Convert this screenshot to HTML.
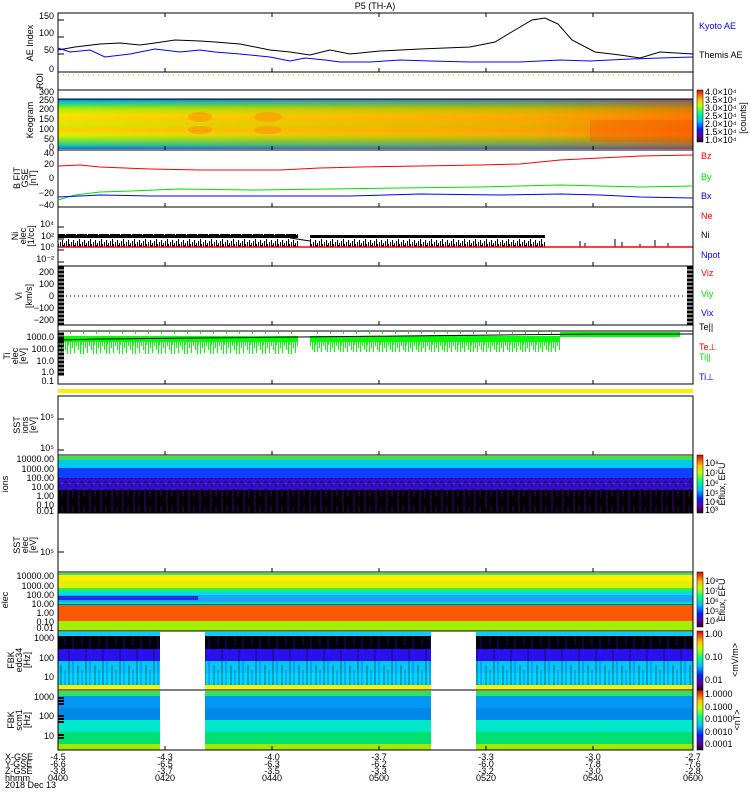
<!DOCTYPE html>
<html><head><meta charset="utf-8"><style>
html,body{margin:0;padding:0;background:#fff;width:750px;height:800px;overflow:hidden}
svg{display:block}
text{font-family:"Liberation Sans",sans-serif;font-size:9px}
</style></head><body>
<svg width="750" height="800" viewBox="0 0 750 800" xmlns="http://www.w3.org/2000/svg">
<defs>
<linearGradient id="keo" x1="0" y1="0" x2="0" y2="1">
<stop offset="0" stop-color="#0060ff"/><stop offset="0.05" stop-color="#00c0d0"/><stop offset="0.12" stop-color="#40e060"/><stop offset="0.2" stop-color="#b0f000"/><stop offset="0.32" stop-color="#f0e800"/><stop offset="0.42" stop-color="#ffd800"/><stop offset="0.5" stop-color="#d0f000"/><stop offset="0.62" stop-color="#ffd000"/><stop offset="0.72" stop-color="#e0f000"/><stop offset="0.82" stop-color="#80e830"/><stop offset="0.92" stop-color="#20d090"/><stop offset="1" stop-color="#0070ff"/>
</linearGradient>
<linearGradient id="keoR" x1="0" y1="0" x2="1" y2="0">
<stop offset="0" stop-color="#ff4000" stop-opacity="0"/><stop offset="0.4" stop-color="#ff6000" stop-opacity="0.25"/><stop offset="0.75" stop-color="#ff4000" stop-opacity="0.35"/><stop offset="1" stop-color="#ff2000" stop-opacity="0.55"/>
</linearGradient>
<linearGradient id="cbar" x1="0" y1="1" x2="0" y2="0">
<stop offset="0" stop-color="#200020"/><stop offset="0.12" stop-color="#6000a0"/><stop offset="0.25" stop-color="#0020ff"/><stop offset="0.4" stop-color="#00c0ff"/><stop offset="0.55" stop-color="#00ff80"/><stop offset="0.7" stop-color="#c0ff00"/><stop offset="0.82" stop-color="#ffc000"/><stop offset="1" stop-color="#e00000"/>
</linearGradient>
<pattern id="spk" width="11" height="14" patternUnits="userSpaceOnUse">
<path d="M0.5 14V3M1.5 14V8M2.5 14V1M3.5 14V6M4.5 14V9M5.5 14V4M6.5 14V10M7.5 14V2M8.5 14V7M9.5 14V5M10.5 14V11" stroke="#000" stroke-width="1"/>
</pattern>
<pattern id="gspk" width="13" height="24" patternUnits="userSpaceOnUse">
<rect width="13" height="6" fill="#00ff00"/>
<path d="M0.5 0V14M2.5 0V20M3.5 0V9M5.5 0V22M7.5 0V12M9.5 0V17M11.5 0V10" stroke="#00ff00" stroke-width="1"/>
</pattern>
<pattern id="speck" width="8" height="8" patternUnits="userSpaceOnUse">
<rect width="8" height="8" fill="#3010d0"/><rect x="1" y="1" width="2" height="2" fill="#200040"/><rect x="5" y="3" width="2" height="1" fill="#8030a0"/><rect x="3" y="5" width="1" height="2" fill="#000"/><rect x="6" y="6" width="2" height="2" fill="#5000a0"/>
</pattern>
<pattern id="purp" width="11" height="23" patternUnits="userSpaceOnUse">
<rect width="11" height="23" fill="#000"/><path d="M2 0V23M7 0V14" stroke="#400070" stroke-width="1"/>
</pattern>
<pattern id="fbk" width="17" height="60" patternUnits="userSpaceOnUse">
<path d="M1 0V60M10 5V50" stroke="#000" stroke-width="1"/><path d="M5 0V55M14 10V45" stroke="#2020ff" stroke-width="1"/>
</pattern>
</defs>

<text x="375" y="9" text-anchor="middle">P5 (TH-A)</text>

<!-- AE panel -->
<rect x="58" y="13" width="635" height="59" fill="none" stroke="#000"/>
<polyline fill="none" stroke="#000" points="58,50 75,47 100,44 120,43 140,45 155,43 175,40 200,41 215,42 240,44 270,50 290,52 310,55 330,50 350,54 380,51 420,49 470,47 495,42 515,30 532,20 545,18 558,24 572,40 595,52 620,55 640,58 660,52 693,54"/>
<polyline fill="none" stroke="#0000ff" points="58,48 70,52 90,50 105,57 130,54 155,49 180,52 200,50 215,52 240,54 270,57 290,61 305,58 325,60 340,62 370,62 400,60 430,61 470,62 520,62 560,60 590,61 630,59 660,58 693,57"/>
<text x="54" y="19" text-anchor="end">150</text><text x="54" y="36" text-anchor="end">100</text><text x="54" y="53" text-anchor="end">50</text><text x="54" y="72" text-anchor="end">0</text>
<text transform="translate(33,43) rotate(-90)" text-anchor="middle">AE Index</text>
<text x="699" y="29" fill="#0000ff">Kyoto AE</text><text x="699" y="58">Themis AE</text>

<!-- ROI -->
<rect x="58" y="72" width="635" height="18" fill="none" stroke="#000"/>
<line x1="58" y1="75" x2="683" y2="75" stroke="#f0a000" stroke-dasharray="1,4"/>
<text transform="translate(43,81) rotate(-90)" text-anchor="middle">ROI</text>

<!-- Keogram -->
<rect x="58" y="99" width="635" height="50" fill="url(#keo)"/>
<rect x="58" y="99" width="635" height="50" fill="url(#keoR)"/>
<ellipse cx="200" cy="117" rx="12" ry="5" fill="#ff8000" opacity="0.45"/><ellipse cx="200" cy="130" rx="12" ry="4" fill="#ff8000" opacity="0.45"/>
<ellipse cx="268" cy="117" rx="14" ry="5" fill="#ff8000" opacity="0.4"/><ellipse cx="268" cy="130" rx="14" ry="4" fill="#ff8000" opacity="0.4"/>
<rect x="590" y="120" width="103" height="22" fill="#ff4000" opacity="0.3"/>
<rect x="58" y="90" width="635" height="60" fill="none" stroke="#000"/>
<line x1="58" y1="99" x2="693" y2="99" stroke="#000"/>
<text x="54" y="95" text-anchor="end">300</text><text x="54" y="103" text-anchor="end">250</text><text x="54" y="112" text-anchor="end">200</text><text x="54" y="122" text-anchor="end">150</text><text x="54" y="132" text-anchor="end">100</text><text x="54" y="142" text-anchor="end">50</text><text x="54" y="150" text-anchor="end">0</text>
<text transform="translate(33,120) rotate(-90)" text-anchor="middle">Keogram</text>
<rect x="697" y="90" width="6" height="52" fill="url(#cbar)" stroke="#000" stroke-width="0.5"/>
<text x="705" y="95" font-size="8">4.0×10⁴</text><text x="705" y="103" font-size="8">3.5×10⁴</text><text x="705" y="111" font-size="8">3.0×10⁴</text><text x="705" y="119" font-size="8">2.5×10⁴</text><text x="705" y="127" font-size="8">2.0×10⁴</text><text x="705" y="135" font-size="8">1.5×10⁴</text><text x="705" y="143" font-size="8">1.0×10⁴</text>
<text transform="translate(746,118) rotate(-90)" text-anchor="middle" font-size="8">[counts]</text>

<!-- B field -->
<rect x="58" y="150" width="635" height="57" fill="none" stroke="#000"/>
<polyline fill="none" stroke="#ff0000" points="58,166 80,165 100,167 150,169 200,170 280,170 320,168 360,167 420,166 480,165 520,164 560,160 600,158 640,156 693,155"/>
<polyline fill="none" stroke="#00e000" points="58,200 75,195 100,192 130,191 180,189 250,190 330,189 400,188 480,187 560,185 600,186 640,187 693,186"/>
<polyline fill="none" stroke="#0000ff" points="58,197 80,196 100,195 150,196 250,196 350,196 420,194 500,195 560,194 600,195 640,197 693,198"/>
<text x="54" y="156" text-anchor="end">40</text><text x="54" y="167" text-anchor="end">20</text><text x="54" y="181" text-anchor="end">0</text><text x="54" y="196" text-anchor="end">−20</text><text x="54" y="208" text-anchor="end">−40</text>
<text transform="translate(20,178) rotate(-90)" text-anchor="middle" font-size="8">B FIT</text><text transform="translate(28,178) rotate(-90)" text-anchor="middle" font-size="8">GSE</text><text transform="translate(36,178) rotate(-90)" text-anchor="middle" font-size="8">[nT]</text>
<text x="701" y="159" fill="#ff0000">Bz</text><text x="701" y="180" fill="#00e000">By</text><text x="701" y="199" fill="#0000ff">Bx</text>

<!-- Ni -->
<rect x="58" y="234" width="240" height="13" fill="url(#spk)"/>
<rect x="310" y="235" width="235" height="12" fill="url(#spk)"/>
<polyline fill="none" stroke="#000" points="290,238 310,241"/>
<path d="M580 247v-6M585 247v-4M615 247v-8M622 247v-5M640 247v-3M655 247v-7M668 247v-4" stroke="#000"/>
<line x1="58" y1="247" x2="693" y2="247" stroke="#ff0000" stroke-width="1.5"/>
<rect x="58" y="207" width="635" height="59" fill="none" stroke="#000"/>
<text x="54" y="227" text-anchor="end">10⁴</text><text x="54" y="239" text-anchor="end">10²</text><text x="54" y="250" text-anchor="end">10⁰</text><text x="54" y="262" text-anchor="end">10⁻²</text>
<text transform="translate(18,236) rotate(-90)" text-anchor="middle" font-size="8">Ni</text><text transform="translate(26,236) rotate(-90)" text-anchor="middle" font-size="8">elec</text><text transform="translate(34,236) rotate(-90)" text-anchor="middle" font-size="8">[1/cc]</text>
<text x="701" y="219" fill="#ff0000">Ne</text><text x="701" y="238">Ni</text><text x="701" y="258" fill="#0000ff">Npot</text>

<!-- Vi -->
<rect x="58" y="266" width="635" height="59" fill="none" stroke="#000"/>
<line x1="58" y1="296" x2="683" y2="296" stroke="#000" stroke-dasharray="1,3"/>
<path d="M58 268h6M58 272h6M58 276h6M58 280h6M58 284h6M58 288h6M58 292h6M58 296h6M58 300h6M58 304h6M58 308h6M58 312h6M58 316h6M58 320h6M58 324h6M687 268h6M687 272h6M687 276h6M687 280h6M687 284h6M687 288h6M687 292h6M687 296h6M687 300h6M687 304h6M687 308h6M687 312h6M687 316h6M687 320h6M687 324h6" stroke="#000" stroke-width="3"/>
<text x="54" y="275" text-anchor="end">200</text><text x="54" y="287" text-anchor="end">100</text><text x="54" y="299" text-anchor="end">0</text><text x="54" y="311" text-anchor="end">−100</text><text x="54" y="323" text-anchor="end">−200</text>
<text transform="translate(22,296) rotate(-90)" text-anchor="middle" font-size="8">Vi</text><text transform="translate(32,296) rotate(-90)" text-anchor="middle" font-size="8">[km/s]</text>
<text x="701" y="276" fill="#ff0000">Viz</text><text x="701" y="297" fill="#00e000">Viy</text><text x="701" y="316" fill="#0000ff">Vix</text>

<!-- Ti -->
<rect x="58" y="332" width="240" height="22" fill="url(#gspk)"/>
<rect x="310" y="332" width="250" height="20" fill="url(#gspk)"/>
<rect x="560" y="332" width="120" height="5" fill="#00ff00"/>
<polyline fill="none" stroke="#000" points="58,340 100,339 200,338 300,337 400,336 500,335 600,334 693,334"/>
<rect x="58" y="325" width="635" height="59" fill="none" stroke="#000"/>
<line x1="58" y1="331" x2="693" y2="331" stroke="#000"/>
<path d="M58 334h6M58 338h6M58 342h6M58 346h6M58 350h6M58 354h6M58 358h6M58 362h6M58 366h6M58 370h6M58 374h6" stroke="#000" stroke-width="3"/>
<text x="54" y="340" text-anchor="end">1000.0</text><text x="54" y="352" text-anchor="end">100.0</text><text x="54" y="364" text-anchor="end">10.0</text><text x="54" y="375" text-anchor="end">1.0</text><text x="54" y="384" text-anchor="end">0.1</text>
<text transform="translate(10,356) rotate(-90)" text-anchor="middle" font-size="8">Ti</text><text transform="translate(18,356) rotate(-90)" text-anchor="middle" font-size="8">elec</text><text transform="translate(26,356) rotate(-90)" text-anchor="middle" font-size="8">[eV]</text>
<text x="699" y="330">Te||</text><text x="699" y="350" fill="#ff0000">Te⊥</text><text x="699" y="360" fill="#00e000">Ti||</text><text x="699" y="380" fill="#0000ff">Ti⊥</text>

<!-- yellow strip -->
<rect x="58" y="389" width="635" height="4" fill="#ffee00"/>

<!-- SST ion -->
<rect x="58" y="396" width="635" height="59" fill="none" stroke="#000"/>
<text x="54" y="420" text-anchor="end">10⁵</text><text x="54" y="451" text-anchor="end">10⁵</text>
<text transform="translate(20,425) rotate(-90)" text-anchor="middle" font-size="8">SST</text><text transform="translate(28,425) rotate(-90)" text-anchor="middle" font-size="8">ions</text><text transform="translate(36,425) rotate(-90)" text-anchor="middle" font-size="8">[eV]</text>

<!-- ESA ion -->
<rect x="58" y="456" width="635" height="4" fill="#40e050"/>
<rect x="58" y="460" width="635" height="8" fill="#00c8f0"/>
<rect x="58" y="468" width="635" height="14" fill="#1040ff"/>
<rect x="58" y="478" width="635" height="13" fill="url(#speck)"/>
<rect x="58" y="490" width="635" height="23" fill="url(#purp)"/>
<rect x="58" y="455" width="635" height="58" fill="none" stroke="#000"/>
<text x="54" y="462" text-anchor="end">10000.00</text><text x="54" y="472" text-anchor="end">1000.00</text><text x="54" y="481" text-anchor="end">100.00</text><text x="54" y="490" text-anchor="end">10.00</text><text x="54" y="499" text-anchor="end">1.00</text><text x="54" y="508" text-anchor="end">0.10</text><text x="54" y="514" text-anchor="end">0.01</text>
<text transform="translate(8,484) rotate(-90)" text-anchor="middle" font-size="8">ions</text>
<rect x="697" y="455" width="6" height="58" fill="url(#cbar)" stroke="#000" stroke-width="0.5"/>
<text x="705" y="466" font-size="8">10⁸</text><text x="705" y="476" font-size="8">10⁷</text><text x="705" y="486" font-size="8">10⁶</text><text x="705" y="496" font-size="8">10⁵</text><text x="705" y="505" font-size="8">10⁴</text><text x="705" y="513" font-size="8">10³</text>
<text transform="translate(725,484) rotate(-90)" text-anchor="middle" font-size="8">Eflux, EFU</text>

<!-- SST electron -->
<rect x="58" y="513" width="635" height="59" fill="none" stroke="#000"/>
<text x="54" y="555" text-anchor="end">10⁵</text>
<text transform="translate(20,545) rotate(-90)" text-anchor="middle" font-size="8">SST</text><text transform="translate(28,545) rotate(-90)" text-anchor="middle" font-size="8">elec</text><text transform="translate(36,545) rotate(-90)" text-anchor="middle" font-size="8">[eV]</text>

<!-- ESA electron -->
<rect x="58" y="573" width="635" height="2" fill="#40e060"/>
<rect x="58" y="575" width="635" height="6" fill="#f8f000"/>
<rect x="58" y="581" width="635" height="7" fill="#e0f000"/>
<rect x="58" y="588" width="635" height="3" fill="#30f040"/>
<rect x="58" y="591" width="635" height="4" fill="#00e0e0"/>
<rect x="58" y="595" width="635" height="7" fill="#20a0ff"/>
<rect x="58" y="596" width="140" height="4" fill="#2030e0"/>
<rect x="58" y="602" width="635" height="3" fill="#00e0c0"/>
<rect x="58" y="606" width="635" height="15" fill="#ff5800"/>
<rect x="58" y="621" width="635" height="10" fill="#a0f000"/>
<line x1="58" y1="605" x2="693" y2="605" stroke="#000"/>
<rect x="58" y="572" width="635" height="59" fill="none" stroke="#000"/>
<text x="54" y="579" text-anchor="end">10000.00</text><text x="54" y="589" text-anchor="end">1000.00</text><text x="54" y="598" text-anchor="end">100.00</text><text x="54" y="607" text-anchor="end">10.00</text><text x="54" y="616" text-anchor="end">1.00</text><text x="54" y="625" text-anchor="end">0.10</text><text x="54" y="631" text-anchor="end">0.01</text>
<text transform="translate(8,600) rotate(-90)" text-anchor="middle" font-size="8">elec</text>
<rect x="697" y="572" width="6" height="55" fill="url(#cbar)" stroke="#000" stroke-width="0.5"/>
<text x="705" y="584" font-size="8">10⁸</text><text x="705" y="594" font-size="8">10⁷</text><text x="705" y="604" font-size="8">10⁶</text><text x="705" y="614" font-size="8">10⁵</text><text x="705" y="624" font-size="8">10⁴</text>
<text transform="translate(725,600) rotate(-90)" text-anchor="middle" font-size="8">Eflux, EFU</text>

<!-- FBK1 -->
<rect x="58" y="632" width="635" height="4" fill="#00d0ff"/>
<rect x="58" y="636" width="635" height="13" fill="#000"/>
<rect x="58" y="649" width="635" height="12" fill="#2a10f0"/>
<rect x="58" y="661" width="635" height="12" fill="#00c8f8"/>
<rect x="58" y="673" width="635" height="12" fill="#00d8ff"/>
<rect x="58" y="636" width="635" height="49" fill="url(#fbk)" opacity="0.5"/>
<rect x="58" y="685" width="635" height="5" fill="#ffee00"/>
<rect x="160" y="632" width="45" height="58" fill="#fff"/>
<rect x="431" y="632" width="45" height="58" fill="#fff"/>
<rect x="58" y="631" width="635" height="59" fill="none" stroke="#000"/>
<text x="54" y="641" text-anchor="end">1000</text><text x="54" y="661" text-anchor="end">100</text><text x="54" y="680" text-anchor="end">10</text>
<text transform="translate(14,660) rotate(-90)" text-anchor="middle" font-size="8">FBK</text><text transform="translate(22,660) rotate(-90)" text-anchor="middle" font-size="8">edc34</text><text transform="translate(30,660) rotate(-90)" text-anchor="middle" font-size="8">[Hz]</text>
<rect x="697" y="631" width="6" height="59" fill="url(#cbar)" stroke="#000" stroke-width="0.5"/>
<text x="705" y="637" font-size="8">1.00</text><text x="705" y="660" font-size="8">0.10</text><text x="705" y="683" font-size="8">0.01</text>
<text transform="translate(738,660) rotate(-90)" text-anchor="middle" font-size="8">&lt;mV/m&gt;</text>

<!-- FBK2 -->
<rect x="58" y="691" width="635" height="5" fill="#30e060"/>
<rect x="58" y="696" width="635" height="12" fill="#0098f0"/>
<rect x="58" y="708" width="635" height="12" fill="#0088e8"/>
<rect x="58" y="720" width="635" height="12" fill="#00e8c8"/>
<rect x="58" y="732" width="635" height="12" fill="#00e070"/>
<rect x="58" y="744" width="635" height="6" fill="#a0e800"/>
<path d="M58 698h6M58 701h6M58 704h6M58 716h6M58 719h6M58 722h6M58 735h6M58 738h6" stroke="#000" stroke-width="2"/>
<rect x="160" y="691" width="45" height="59" fill="#fff"/>
<rect x="431" y="691" width="45" height="59" fill="#fff"/>
<rect x="58" y="690" width="635" height="60" fill="none" stroke="#000"/>
<text x="54" y="700" text-anchor="end">1000</text><text x="54" y="719" text-anchor="end">100</text><text x="54" y="739" text-anchor="end">10</text>
<text transform="translate(14,720) rotate(-90)" text-anchor="middle" font-size="8">FBK</text><text transform="translate(22,720) rotate(-90)" text-anchor="middle" font-size="8">scm1</text><text transform="translate(30,720) rotate(-90)" text-anchor="middle" font-size="8">[Hz]</text>
<rect x="697" y="690" width="6" height="60" fill="url(#cbar)" stroke="#000" stroke-width="0.5"/>
<text x="705" y="697" font-size="8">1.0000</text><text x="705" y="710" font-size="8">0.1000</text><text x="705" y="722" font-size="8">0.0100</text><text x="705" y="735" font-size="8">0.0010</text><text x="705" y="747" font-size="8">0.0001</text>
<text transform="translate(740,720) rotate(-90)" text-anchor="middle" font-size="8">&lt;nT&gt;</text>

<!-- ticks -->
<g stroke="#000">
<path d="M165 13v4M272 13v4M379 13v4M486 13v4M593 13v4M165 72v-4M272 72v-4M379 72v-4M486 72v-4M593 72v-4"/>
<path d="M165 150v-4M272 150v-4M379 150v-4M486 150v-4M593 150v-4M165 207v-4M272 207v-4M379 207v-4M486 207v-4M593 207v-4"/>
<path d="M165 266v-4M272 266v-4M379 266v-4M486 266v-4M593 266v-4M165 325v-4M272 325v-4M379 325v-4M486 325v-4M593 325v-4"/>
<path d="M165 384v-4M272 384v-4M379 384v-4M486 384v-4M593 384v-4M165 455v-4M272 455v-4M379 455v-4M486 455v-4M593 455v-4"/>
<path d="M165 513v-4M272 513v-4M379 513v-4M486 513v-4M593 513v-4M165 572v-4M272 572v-4M379 572v-4M486 572v-4M593 572v-4"/>
<path d="M165 750v-4M272 750v-4M379 750v-4M486 750v-4M593 750v-4"/>
<path d="M58 20h6M58 37h6M58 54h6M58 227h6M58 239h6M58 250h6M58 262h6M58 419h6M58 450h6M58 552h6"/>
</g>

<!-- bottom labels -->
<g font-size="8">
<text x="5" y="760">X-GSE</text><text x="5" y="767">Y-GSE</text><text x="5" y="774">Z-GSE</text><text x="5" y="781">hhmm</text><text x="5" y="788">2018 Dec 13</text>
<g text-anchor="middle">
<text x="58" y="760">-4.5</text><text x="58" y="767">-6.6</text><text x="58" y="774">-3.8</text><text x="58" y="781">0400</text>
<text x="165" y="760">-4.3</text><text x="165" y="767">-6.5</text><text x="165" y="774">-3.7</text><text x="165" y="781">0420</text>
<text x="272" y="760">-4.0</text><text x="272" y="767">-6.3</text><text x="272" y="774">-3.5</text><text x="272" y="781">0440</text>
<text x="379" y="760">-3.7</text><text x="379" y="767">-6.2</text><text x="379" y="774">-3.3</text><text x="379" y="781">0500</text>
<text x="486" y="760">-3.3</text><text x="486" y="767">-6.0</text><text x="486" y="774">-3.2</text><text x="486" y="781">0520</text>
<text x="593" y="760">-3.0</text><text x="593" y="767">-7.8</text><text x="593" y="774">-3.0</text><text x="593" y="781">0540</text>
<text x="693" y="760">-2.7</text><text x="693" y="767">-7.6</text><text x="693" y="774">-2.8</text><text x="693" y="781">0600</text>
</g></g>
</svg>
</body></html>
